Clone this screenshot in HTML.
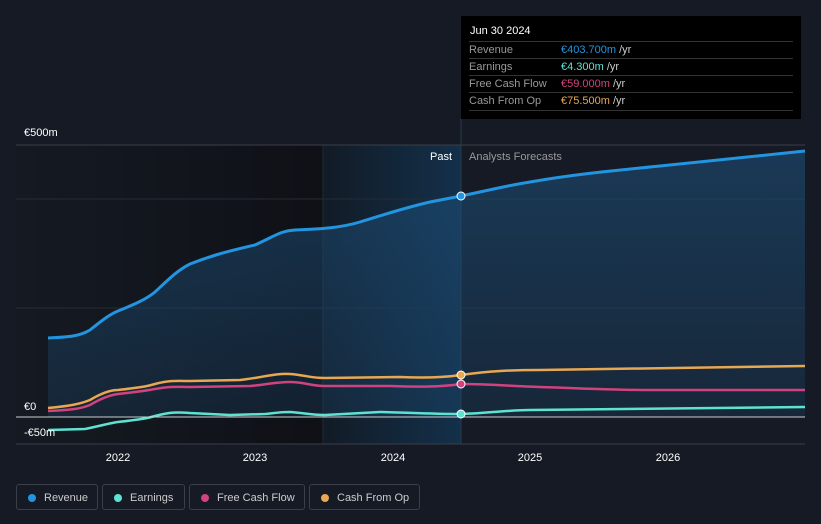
<!DOCTYPE html>
<html><head><style>
body{margin:0;background:#151a24;font-family:"Liberation Sans",sans-serif;}
.wrap{position:relative;width:821px;height:524px;overflow:hidden;background:#151a24}
.tip{position:absolute;left:461px;top:16px;width:340px;height:103px;background:#000;color:#fff;font-size:11px}
.tip .h{position:absolute;left:9px;top:9px;font-size:11px}
.row{position:absolute;left:8px;width:324px;border-top:1px solid #333;height:17px;line-height:17px;color:#999}
.row span{position:absolute;left:92px}
.leg{position:absolute;top:484px;height:26px;border:1px solid #3a3f4a;border-radius:3px;color:#ccc;font-size:11px;line-height:26px;box-sizing:border-box;padding-left:27px}
.leg i{position:absolute;left:11px;top:9px;width:8px;height:8px;border-radius:50%}
</style></head><body><div class="wrap">
<svg width="821" height="524" style="position:absolute;left:0;top:0">
<defs>
<linearGradient id="pb" x1="0" x2="1"><stop offset="0" stop-color="#151a22"/><stop offset="0.65" stop-color="#0f1117"/><stop offset="1" stop-color="#0f1117"/></linearGradient>
<linearGradient id="hl" x1="0" x2="1"><stop offset="0" stop-color="#121b26"/><stop offset="1" stop-color="#13304a"/></linearGradient>
<linearGradient id="rv" x1="0" y1="0" x2="0" y2="1"><stop offset="0" stop-color="#1d4e78" stop-opacity="0.6"/><stop offset="1" stop-color="#1d4e78" stop-opacity="0.25"/></linearGradient>
</defs>
<rect x="16" y="145" width="445" height="299" fill="url(#pb)"/>
<rect x="323" y="145" width="138" height="299" fill="url(#hl)"/>
<line x1="323" y1="145" x2="323" y2="444" stroke="#1e2a36"/>
<line x1="16" y1="145" x2="805" y2="145" stroke="#3a3f4a"/>
<line x1="16" y1="199" x2="805" y2="199" stroke="#262b35"/>
<line x1="16" y1="308" x2="805" y2="308" stroke="#262b35"/>
<line x1="461" y1="118" x2="461" y2="444" stroke="#2a3a4a"/>
<path d="M48,338 C70,337 80,336 90,330 C100,322 110,314 118,311 C135,304 145,300 155,292 C170,278 178,270 190,264 C210,256 225,252 255,245 C275,236 280,231 295,230 C320,229 340,228 360,222 C380,216 400,209 430,202 L461,196 C490,190 510,185 530,182 C570,175 600,172 660,166 L805,151 L805,417 L48,417Z" fill="url(#rv)"/>
<path d="M48,338 C70,337 80,336 90,330 C100,322 110,314 118,311 C135,304 145,300 155,292 C170,278 178,270 190,264 C210,256 225,252 255,245 C275,236 280,231 295,230 C320,229 340,228 360,222 C380,216 400,209 430,202 L461,196 C490,190 510,185 530,182 C570,175 600,172 660,166 L805,151" fill="none" stroke="#2394df" stroke-width="3"/>
<path d="M48,408 C70,406 80,404 90,400 C100,394 110,390 118,390 C135,388 145,387 155,384 C170,380 178,381 190,381 L240,380 C260,378 275,373 290,374 C305,375 310,378 325,378 L400,377 C420,378 440,378 461,375 C490,371 510,370 540,370 L805,366" fill="none" stroke="#e8a851" stroke-width="2.5"/>
<path d="M48,411 C70,410 80,409 90,405 C100,399 110,395 118,394 C135,392 145,391 155,389 C170,386 178,387 190,387 L250,386 C265,385 275,382 290,382 C305,382 310,386 325,386 L390,386 C420,387 440,387 461,384 C490,384 510,386 540,387 C600,389 620,390 650,390 L805,390" fill="none" stroke="#d0437e" stroke-width="2.5"/>
<path d="M48,430 L85,429 C100,426 110,423 118,422 C135,420 145,419 155,416 C170,412 178,412 190,413 L230,415 L265,414 C275,413 280,412 290,412 C305,413 310,415 325,415 L380,412 C420,413 440,414 461,414 C490,413 510,410 530,410 L805,407" fill="none" stroke="#5ee3d1" stroke-width="2.5"/>
<line x1="16" y1="417" x2="805" y2="417" stroke="#ccc" stroke-width="1"/>
<line x1="16" y1="444" x2="805" y2="444" stroke="#3a3f4a"/>
<circle cx="461" cy="196" r="4" fill="#2394df" stroke="#fff"/>
<circle cx="461" cy="375" r="4" fill="#e8a851" stroke="#fff"/>
<circle cx="461" cy="384" r="4" fill="#d0437e" stroke="#fff"/>
<circle cx="461" cy="414" r="4" fill="#5ee3d1" stroke="#fff"/>
<g fill="#fff" font-size="11" font-family="Liberation Sans">
<text x="24" y="136">€500m</text><text x="24" y="410">€0</text><text x="24" y="436">-€50m</text>
<text x="430" y="160">Past</text>
<text x="469" y="160" fill="#999">Analysts Forecasts</text>
<g text-anchor="middle"><text x="118" y="461">2022</text><text x="255" y="461">2023</text><text x="393" y="461">2024</text><text x="530" y="461">2025</text><text x="668" y="461">2026</text></g>
</g>
</svg>
<div class="tip"><div class="h">Jun 30 2024</div>
<div class="row" style="top:25px">Revenue<span style="color:#2394df">€403.700m <b style="color:#ccc;font-weight:normal">/yr</b></span></div>
<div class="row" style="top:42px">Earnings<span style="color:#5ee3d1">€4.300m <b style="color:#ccc;font-weight:normal">/yr</b></span></div>
<div class="row" style="top:59px">Free Cash Flow<span style="color:#d0437e">€59.000m <b style="color:#ccc;font-weight:normal">/yr</b></span></div>
<div class="row" style="top:76px;border-bottom:1px solid #333">Cash From Op<span style="color:#e8a851">€75.500m <b style="color:#ccc;font-weight:normal">/yr</b></span></div>
</div>
<div class="leg" style="left:16px;width:82px"><i style="background:#2394df"></i>Revenue</div>
<div class="leg" style="left:102px;width:83px"><i style="background:#5ee3d1"></i>Earnings</div>
<div class="leg" style="left:189px;width:116px"><i style="background:#d0437e"></i>Free Cash Flow</div>
<div class="leg" style="left:309px;width:111px"><i style="background:#e8a851"></i>Cash From Op</div>
</div></body></html>
